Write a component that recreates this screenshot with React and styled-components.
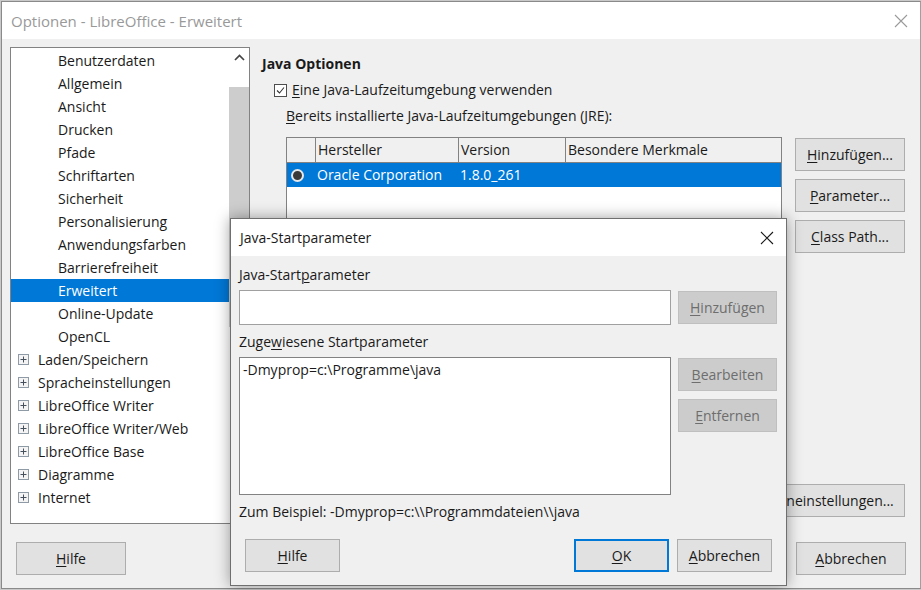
import React from 'react'
import styled, { createGlobalStyle } from 'styled-components'

const GlobalStyle = createGlobalStyle`
  html, body {
    margin: 0;
    padding: 0;
    height: 100%;
    overflow: hidden;
    background: #c9c9c9;
    color: #1a1a1a;
    font: 14px/20px "Open Sans", "Noto Sans", sans-serif;
  }
  * { box-sizing: border-box; }
`

const Page = styled.div`
  position: relative;
  width: 921px;
  height: 590px;
  padding: 1px 0 0 1px;
`

const Window = styled.div`
  display: flex;
  flex-direction: column;
  width: 920px;
  height: 588px;
  background: #f0f0f0;
  border: 1px solid #8a8a8a;
  border-right-color: #a0a0a0;
`

const TitleBar = styled.div`
  display: flex;
  align-items: center;
  justify-content: space-between;
  flex: none;
  height: 37px;
  padding: 0 12px 0 9px;
  background: #fff;
  font-size: 15px;
  color: ${p => (p.$inactive ? '#999' : '#1a1a1a')};
`

const Body = styled.div`
  display: flex;
  height: 485px;
  padding: 8px 14px 0 8px;
  flex: none;
`

const Tree = styled.div`
  position: relative;
  display: flex;
  flex: none;
  width: 240px;
  height: 477px;
  background: #fff;
  border: 1px solid #828282;
`

const TreeRows = styled.div`
  flex: 1;
  padding-top: 1px;
`

const TreeRow = styled.div`
  display: flex;
  align-items: center;
  gap: 9px;
  height: 23px;
  padding-left: ${p => (p.$top ? '7px' : '47px')};
  background: ${p => (p.$selected ? '#0078d7' : 'transparent')};
  color: ${p => (p.$selected ? '#fff' : '#1a1a1a')};
`

const Scrollbar = styled.div`
  display: flex;
  flex-direction: column;
  align-items: center;
  flex: none;
  width: 20px;
  padding-top: 6px;
`

const Thumb = styled.div`
  width: 100%;
  height: 240px;
  margin-top: 26px;
  background: #cdcdcd;
`

const Panel = styled.div`
  display: flex;
  flex-direction: column;
  flex: 1;
  padding: 7px 0 0 12px;
`

const Heading = styled.div`
  font-weight: 700;
`

const CheckRow = styled.label`
  display: flex;
  align-items: center;
  gap: 5px;
  margin: 6px 0 0 12px;
`

const Caption = styled.div`
  margin: 6px 0 0 24px;
`

const TableRow = styled.div`
  display: flex;
  flex: 1;
  gap: 13px;
  margin: 11px 0 7px 24px;
`

const Table = styled.div`
  flex: none;
  width: 496px;
  background: #fff;
  border: 1px solid #828282;
`

const Columns = styled.div`
  display: grid;
  grid-template-columns: 28px 143px 107px 1fr;
  align-items: center;
  height: ${p => (p.$head ? '25px' : '24px')};
  background: ${p => (p.$head ? '#f0f0f0' : '#0078d7')};
  color: ${p => (p.$head ? '#1a1a1a' : '#fff')};
  border-bottom: ${p => (p.$head ? '1px solid #828282' : 'none')};
`

const HeadCell = styled.div`
  height: 100%;
  padding-left: 2px;
  line-height: 24px;
  border-left: ${p => (p.$first ? 'none' : '1px solid #828282')};
`

const Cell = styled.div`
  padding-left: 2px;
`

const Radio = styled.span`
  display: block;
  justify-self: center;
  width: 13px;
  height: 13px;
  margin-right: 10px;
  margin-left: 2px;
  background: #3a3a3a;
  border: 2px solid #e8e8e8;
  border-radius: 50%;
`

const ButtonColumn = styled.div`
  display: flex;
  flex-direction: column;
  align-items: flex-end;
  flex: none;
  gap: 8px;
  width: 110px;
  margin-top: 1px;
`

const Button = styled.div`
  display: flex;
  align-items: center;
  justify-content: center;
  flex: none;
  width: ${p => p.$width || 110}px;
  height: 33px;
  margin-top: ${p => (p.$pushed ? 'auto' : '0')};
  white-space: nowrap;
  background: ${p => (p.$disabled ? '#cccccc' : '#e1e1e1')};
  color: ${p => (p.$disabled ? '#6e6e6e' : '#1a1a1a')};
  border: ${p => (p.$primary ? '2px solid #0078d7' : p.$disabled ? '1px solid #bfbfbf' : '1px solid #adadad')};
`

const Footer = styled.div`
  display: flex;
  flex: 1;
  justify-content: space-between;
  padding: 18px 14px 0 14px;
`

const FooterGroup = styled.div`
  display: flex;
  gap: 9px;
`

const Modal = styled.div`
  position: absolute;
  left: 230px;
  top: 218px;
  display: flex;
  flex-direction: column;
  width: 557px;
  height: 368px;
  background: #f0f0f0;
  border: 1px solid #6f6f6f;
  box-shadow: 0 0 14px rgba(0, 0, 0, 0.38);
`

const ModalBody = styled.div`
  display: flex;
  flex-direction: column;
  flex: 1;
  padding: 9px 8px 0 8px;
`

const FieldLabel = styled.div`
  margin-top: ${p => p.$gap || 0}px;
  margin-bottom: 5px;
`

const FieldRow = styled.div`
  display: flex;
  gap: 7px;
`

const Input = styled.div`
  flex: none;
  width: 432px;
  height: 35px;
  background: #fff;
  border: 1px solid #a0a0a0;
`

const ListBox = styled(Input)`
  height: 138px;
  padding: 2px 3px;
  border-color: #828282;
`

const SideButtons = styled.div`
  display: flex;
  flex-direction: column;
  gap: 8px;
  padding-top: 1px;
`

const Example = styled.div`
  margin-top: 7px;
`

const ModalFooter = styled.div`
  display: flex;
  justify-content: space-between;
  margin-top: 17px;
  padding: 0 6px;
`

const ModalFooterGroup = styled.div`
  display: flex;
  gap: 8px;
`

const Key = styled.u`
  text-underline-offset: 2px;
  text-decoration-thickness: 1px;
`

function CloseIcon({ color }) {
  return (
    <svg width="14" height="14" viewBox="0 0 14 14" fill="none" stroke={color} strokeWidth="1.1">
      <path d="M1 1 13 13M13 1 1 13" />
    </svg>
  )
}

function PlusBox() {
  return (
    <svg width="11" height="11" viewBox="0 0 11 11" fill="none">
      <rect x="0.5" y="0.5" width="10" height="10" fill="#f4f4f4" stroke="#8e9aa6" />
      <path d="M2.5 5.5h6M5.5 2.5v6" stroke="#44505c" />
    </svg>
  )
}

function CheckBox() {
  return (
    <svg width="13" height="13" viewBox="0 0 13 13" fill="none">
      <rect x="0.5" y="0.5" width="12" height="12" fill="#fff" stroke="#4d4d4d" />
      <path d="M3 6.5 5.5 9 10 3.5" stroke="#333" strokeWidth="1.1" />
    </svg>
  )
}

function ChevronUp() {
  return (
    <svg width="11" height="7" viewBox="0 0 11 7" fill="none" stroke="#444" strokeWidth="1.7">
      <path d="M1 6 5.5 1.5 10 6" />
    </svg>
  )
}

const children = ['Benutzerdaten', 'Allgemein', 'Ansicht', 'Drucken', 'Pfade', 'Schriftarten', 'Sicherheit',
  'Personalisierung', 'Anwendungsfarben', 'Barrierefreiheit', 'Erweitert', 'Online-Update', 'OpenCL']
const groups = ['Laden/Speichern', 'Spracheinstellungen', 'LibreOffice Writer', 'LibreOffice Writer/Web',
  'LibreOffice Base', 'Diagramme', 'Internet']

export default function App() {
  return (
    <Page>
      <GlobalStyle />
      <Window>
        <TitleBar $inactive>
          <span>Optionen - LibreOffice - Erweitert</span>
          <CloseIcon color="#9a9a9a" />
        </TitleBar>
        <Body>
          <Tree>
            <TreeRows>
              {children.map(name => (
                <TreeRow key={name} $selected={name === 'Erweitert'}>{name}</TreeRow>
              ))}
              {groups.map(name => (
                <TreeRow key={name} $top><PlusBox />{name}</TreeRow>
              ))}
            </TreeRows>
            <Scrollbar>
              <ChevronUp />
              <Thumb />
            </Scrollbar>
          </Tree>
          <Panel>
            <Heading>Java Optionen</Heading>
            <CheckRow><CheckBox /><span><Key>E</Key>ine Java-Laufzeitumgebung verwenden</span></CheckRow>
            <Caption><Key>B</Key>ereits installierte Java-Laufzeitumgebungen (JRE):</Caption>
            <TableRow>
              <Table>
                <Columns $head>
                  <HeadCell $first />
                  <HeadCell>Hersteller</HeadCell>
                  <HeadCell>Version</HeadCell>
                  <HeadCell>Besondere Merkmale</HeadCell>
                </Columns>
                <Columns>
                  <Radio />
                  <Cell>Oracle Corporation</Cell>
                  <Cell>1.8.0_261</Cell>
                  <Cell />
                </Columns>
              </Table>
              <ButtonColumn>
                <Button><span><Key>H</Key>inzufügen...</span></Button>
                <Button><span><Key>P</Key>arameter...</span></Button>
                <Button><span><Key>C</Key>lass Path...</span></Button>
                <Button $pushed $width={180}>Experteneinstellungen...</Button>
              </ButtonColumn>
            </TableRow>
          </Panel>
        </Body>
        <Footer>
          <Button><span><Key>H</Key>ilfe</span></Button>
          <FooterGroup>
            <Button><span><Key>O</Key>K</span></Button>
            <Button><span><Key>A</Key>bbrechen</span></Button>
          </FooterGroup>
        </Footer>
      </Window>

      <Modal>
        <TitleBar>
          <span style={{ fontSize: 14 }}>Java-Startparameter</span>
          <CloseIcon color="#1a1a1a" />
        </TitleBar>
        <ModalBody>
          <FieldLabel>Java-Start<Key>p</Key>arameter</FieldLabel>
          <FieldRow>
            <Input />
            <SideButtons>
              <Button $disabled $width={99}><span><Key>H</Key>inzufügen</span></Button>
            </SideButtons>
          </FieldRow>
          <FieldLabel $gap={7}>Zuge<Key>w</Key>iesene Startparameter</FieldLabel>
          <FieldRow>
            <ListBox>-Dmyprop=c:\Programme\java</ListBox>
            <SideButtons>
              <Button $disabled $width={99}><span><Key>B</Key>earbeiten</span></Button>
              <Button $disabled $width={99}><span><Key>E</Key>ntfernen</span></Button>
            </SideButtons>
          </FieldRow>
          <Example>Zum Beispiel: -Dmyprop=c:\\Programmdateien\\java</Example>
          <ModalFooter>
            <Button $width={95}><span><Key>H</Key>ilfe</span></Button>
            <ModalFooterGroup>
              <Button $primary $width={95}><span><Key>O</Key>K</span></Button>
              <Button $width={95}><span><Key>A</Key>bbrechen</span></Button>
            </ModalFooterGroup>
          </ModalFooter>
        </ModalBody>
      </Modal>
    </Page>
  )
}
